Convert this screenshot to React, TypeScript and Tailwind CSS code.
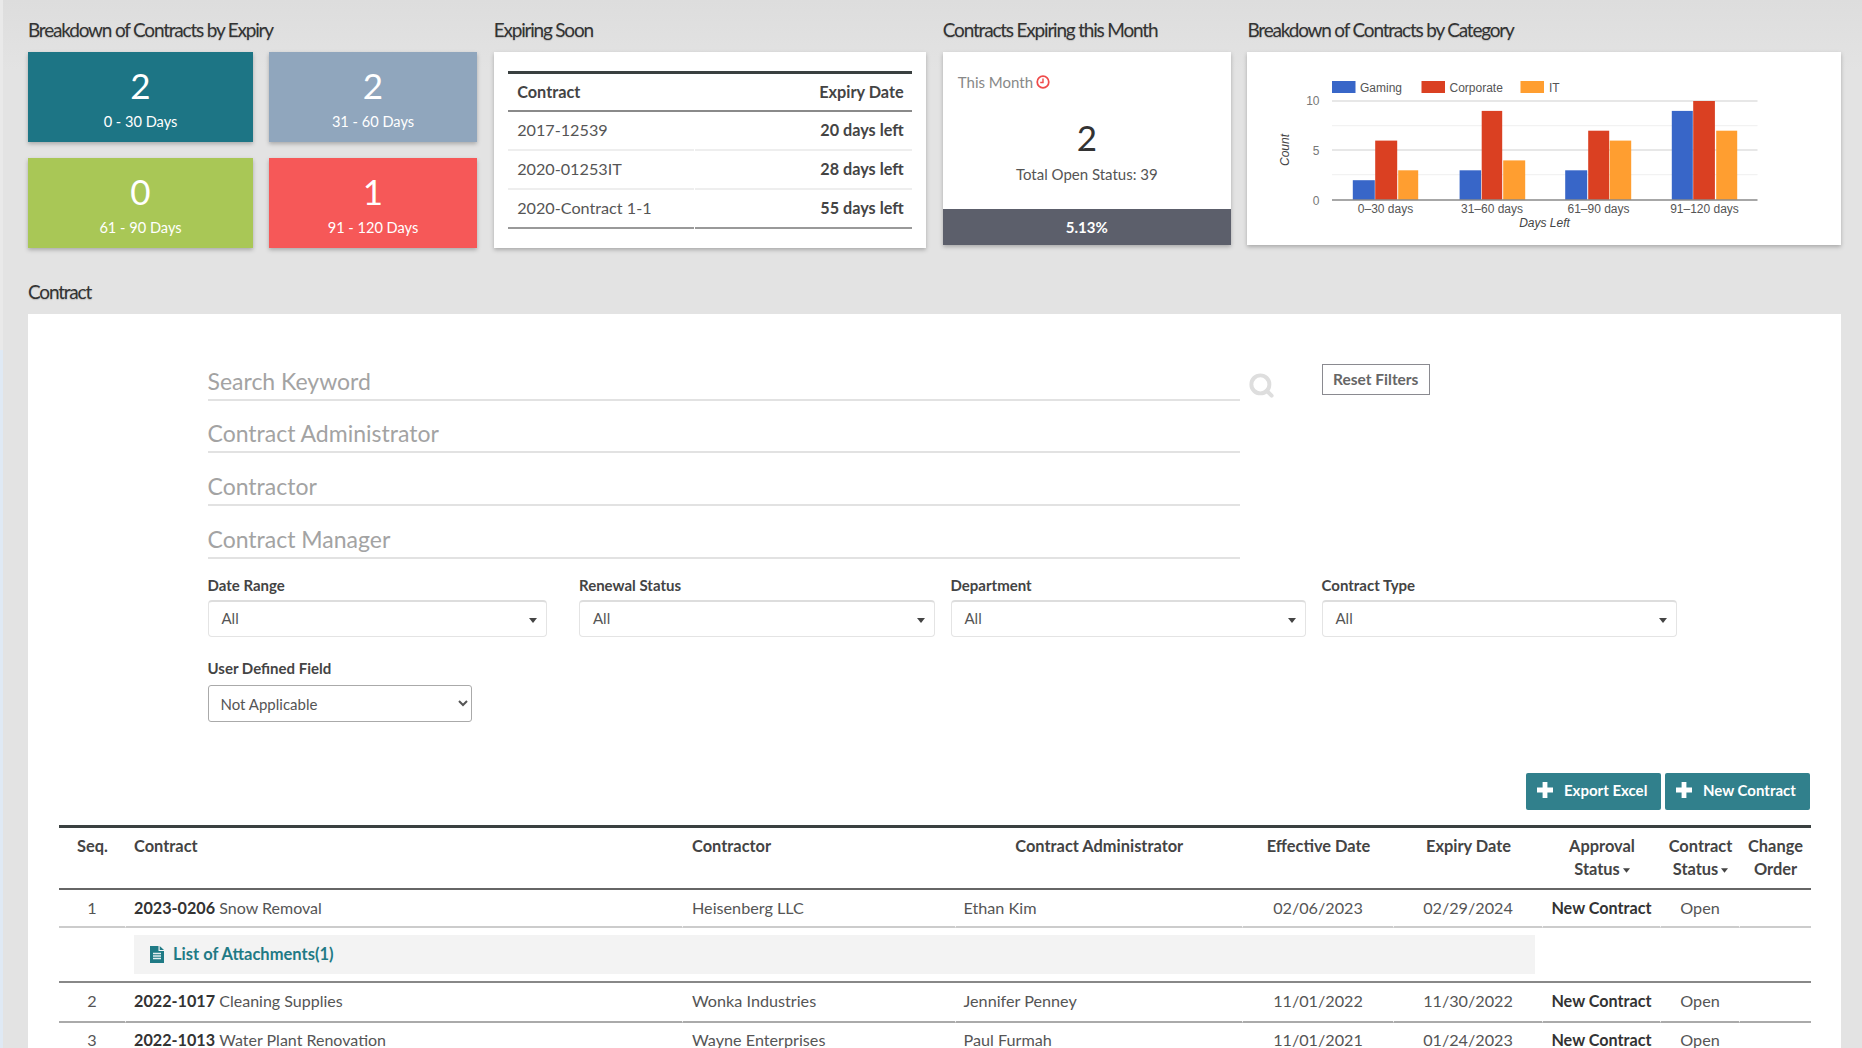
import React from "react";
import { Search } from "lucide-react";

const tiles = [
  { n: "2", l: "0 - 30 Days", c: "bg-[#1d7585]" },
  { n: "2", l: "31 - 60 Days", c: "bg-[#90a6bd]" },
  { n: "0", l: "61 - 90 Days", c: "bg-[#a9c756]" },
  { n: "1", l: "91 - 120 Days", c: "bg-[#f65858]" },
];

const titleCls =
  "h-[22px] leading-[22px] text-[19px] tracking-[-1.2px] text-[#333] [text-shadow:0_1px_1px_#bbb] whitespace-nowrap";
const shadow = "shadow-[0_2px_4px_rgba(0,0,0,0.25)]";

function Chart() {
  const groups = [
    { l: "0–30 days", cx: 1386, bars: [[1353.3, 22, 2], [1375.7, 22, 6], [1398.7, 20, 3]] },
    { l: "31–60 days", cx: 1492.5, bars: [[1460.1, 21.5, 3], [1482.2, 20.5, 9], [1503.7, 22, 4]] },
    { l: "61–90 days", cx: 1599, bars: [[1565.7, 22, 3], [1588.7, 21, 7], [1610.2, 21.5, 6]] },
    { l: "91–120 days", cx: 1705, bars: [[1672.3, 21, 9], [1693.7, 21.7, 10], [1716.7, 21, 7]] },
  ];
  const colors = ["#3866c8", "#da4022", "#ff9e30"];
  const ox = 1247.5;
  const oy = 52;
  return (
    <svg viewBox="0 0 593.5 193" className="w-full h-full block" fontFamily="'Liberation Sans', Arial, sans-serif">
      {[
        [1332.5, "Gaming", 1360.5, 0],
        [1422, "Corporate", 1450, 1],
        [1521, "IT", 1549.5, 2],
      ].map(([x, t, tx, i]) => (
        <g key={t as string}>
          <rect x={(x as number) - ox} y={81 - oy} width={23.5} height={12} fill={colors[i as number]} />
          <text x={(tx as number) - ox} y={91.5 - oy} fontSize={12} fill="#555">{t}</text>
        </g>
      ))}
      {[125.7, 174.7].map((y) => (
        <line key={y} x1={1332.5 - ox} x2={1758 - ox} y1={y - oy} y2={y - oy} stroke="#f2f2f2" strokeWidth={1.2} />
      ))}
      {[101, 150].map((y) => (
        <line key={y} x1={1332.5 - ox} x2={1758 - ox} y1={y - oy} y2={y - oy} stroke="#d0d0d0" strokeWidth={1.2} />
      ))}
      {groups.map((g) => (
        <g key={g.l}>
          {g.bars.map(([x, w, v], i) => (
            <rect key={i} x={x - ox} y={200 - v * 9.9 - oy} width={w} height={v * 9.9} fill={colors[i]} />
          ))}
          <text x={g.cx - ox} y={212.5 - oy} textAnchor="middle" fontSize={12} fill="#555">{g.l}</text>
        </g>
      ))}
      <line x1={1332.5 - ox} x2={1758 - ox} y1={200 - oy} y2={200 - oy} stroke="#8a8a8a" strokeWidth={1.6} />
      {[["10", 105], ["5", 154.5], ["0", 204.5]].map(([t, y]) => (
        <text key={t as string} x={1320 - ox} y={(y as number) - oy} textAnchor="end" fontSize={12} fill="#777">{t}</text>
      ))}
      <text x={1545 - ox} y={227 - oy} textAnchor="middle" fontSize={12} fontStyle="italic" fill="#444">Days Left</text>
      <text transform={`translate(${1289 - ox} ${150 - oy}) rotate(-90)`} textAnchor="middle" fontSize={12} fontStyle="italic" fill="#444">Count</text>
    </svg>
  );
}

function Caret() {
  return (
    <svg viewBox="0 0 8 5" className="inline-block w-[7px] h-[5px] ml-[3px] align-middle">
      <path d="M0 0h8L4 5z" fill="#444" />
    </svg>
  );
}

function ThickPlus() {
  return (
    <svg viewBox="0 0 16 16" className="w-[16px] h-[16px] shrink-0">
      <path d="M5.6 0h4.8v5.6H16v4.8h-5.6V16H5.6v-5.6H0V5.6h5.6z" fill="#ffffff" />
    </svg>
  );
}

function FileIcon() {
  return (
    <svg viewBox="0 0 14 17" className="w-[14px] h-[17px] shrink-0">
      <path d="M0 0h8.5v5H14v12H0z" fill="#1f7a85" />
      <path d="M9.7 0L14 4H9.7z" fill="#1f7a85" />
      <path d="M3 7.5h8M3 10h8M3 12.5h8" stroke="#e4eef0" strokeWidth="1.3" />
    </svg>
  );
}

function FilterSelect({ label, w }: { label: string; w: string }) {
  return (
    <div className={w}>
      <div className="h-[20px] leading-[20px] text-[15px] font-bold text-[#444] mb-[5px]">{label}</div>
      <div className="h-[37px] border border-[#e4e4e4] border-t-[2px] border-t-[#ddd] rounded-[4px] flex items-center justify-between pl-[13px] pr-[9px] text-[15px] text-[#555]">
        <span className="mb-[2px]">All</span>
        <svg viewBox="0 0 8 5" className="w-[8px] h-[5px] mt-[3px]">
          <path d="M0 0h8L4 5z" fill="#444" />
        </svg>
      </div>
    </div>
  );
}

const rows = [
  { s: "1", id: "2023-0206", n: "Snow Removal", c: "Heisenberg LLC", a: "Ethan Kim", e: "02/06/2023", x: "02/29/2024" },
  { s: "2", id: "2022-1017", n: "Cleaning Supplies", c: "Wonka Industries", a: "Jennifer Penney", e: "11/01/2022", x: "11/30/2022" },
  { s: "3", id: "2022-1013", n: "Water Plant Renovation", c: "Wayne Enterprises", a: "Paul Furmah", e: "11/01/2021", x: "01/24/2023" },
];

const rowLine = ["border-b-[#ccc]", "border-b-[#aaa] pb-[1px]", "border-b-[#aaa] pb-[4px]"];
const rowH = ["h-[38px]", "h-[40.5px]", "h-[39.5px]"];

export default function App() {
  return (
    <div className="h-[1048px] overflow-hidden flex bg-[linear-gradient(#dddddd,#e3e3e3_70px)] font-['Lato','Noto_Sans',sans-serif] text-[#444]">
      <div className="w-[3px] shrink-0 bg-[linear-gradient(#e9e9e9_350px,#dfe9f4_350px)]" />
      <div className="flex-1 min-w-0 pl-[25px] pr-[21px]">
        <div className="flex gap-[16.67px] pt-[19px] h-[281px]">
          <div className="w-[449px] shrink-0">
            <div className={`${titleCls} mb-[11px]`}>Breakdown of Contracts by Expiry</div>
            <div className="grid grid-cols-[225px_208px] grid-rows-[90px_90px] gap-x-[16px] gap-y-[16px]">
              {tiles.map((t) => (
                <div key={t.l} className={`${t.c} ${shadow} flex flex-col items-center text-white`}>
                  <div className="mt-[12px] h-[42px] leading-[42px] text-[35px]">{t.n}</div>
                  <div className="mt-[6px] h-[20px] leading-[20px] text-[14.6px]">{t.l}</div>
                </div>
              ))}
            </div>
          </div>
          <div className="w-[432.5px] shrink-0">
            <div className={`${titleCls} mb-[11px]`}>Expiring Soon</div>
            <div className={`h-[196px] bg-white ${shadow} pt-[19px] px-[14.5px]`}>
              <div className="border-t-[3px] border-[#3a4040]">
                <div className="h-[38px] pt-[1px] border-b-2 border-[#8a8a8a] flex items-center justify-between pl-[9px] pr-[8px] text-[16.3px] font-bold text-[#444]">
                  <span>Contract</span>
                  <span>Expiry Date</span>
                </div>
                {[
                  ["2017-12539", "20 days left"],
                  ["2020-01253IT", "28 days left"],
                  ["2020-Contract 1-1", "55 days left"],
                ].map(([a, b], i) => (
                  <div key={a} className="h-[39px] flex gap-[1px] text-[16.2px]">
                    <div className={`w-[185.5px] pl-[9px] flex items-center border-b-2 ${i === 2 ? "border-[#999]" : "border-[#eee]"} text-[#555]`}>
                      {a}
                    </div>
                    <div className={`flex-1 pr-[8px] flex items-center justify-end border-b-2 ${i === 2 ? "border-[#999]" : "border-[#eee]"} font-bold text-[#444]`}>
                      {b}
                    </div>
                  </div>
                ))}
              </div>
            </div>
          </div>
          <div className="w-[288px] shrink-0">
            <div className={`${titleCls} mb-[11px]`}>Contracts Expiring this Month</div>
            <div className={`h-[193px] bg-white ${shadow} flex flex-col`}>
              <div className="flex-1 relative">
                <div className="pt-[20px] pl-[15px] flex items-center gap-[3px] text-[15px] text-[#888] h-[40px]">
                  <span>This Month</span>
                  <svg viewBox="0 0 16 16" className="w-[14px] h-[14px]">
                    <circle cx="8" cy="8" r="6.6" fill="none" stroke="#ef4b4b" strokeWidth="2" />
                    <path d="M8 4v4.5H4.8" fill="none" stroke="#ef4b4b" strokeWidth="1.6" />
                  </svg>
                </div>
                <div className="text-center text-[35px] leading-[42px] text-[#333] mt-[24px]">2</div>
                <div className="text-center text-[15px] leading-[20px] text-[#555] mt-[6px]">Total Open Status: 39</div>
              </div>
              <div className="h-[36px] bg-[#5c5f6b] text-white font-bold text-[15px] flex items-center justify-center">5.13%</div>
            </div>
          </div>
          <div className="w-[593.5px] shrink-0">
            <div className={`${titleCls} mb-[11px]`}>Breakdown of Contracts by Category</div>
            <div className={`h-[193px] bg-white ${shadow}`}>
              <Chart />
            </div>
          </div>
        </div>

        <div className={`${titleCls} mb-[11px]`}>Contract</div>

        <div className="bg-white w-[1813px] h-[800px] pt-[34px]">
          <div className="pl-[179.5px]">
            <div className="flex items-start">
              <div className="w-[1032.5px] shrink-0">
                {["Search Keyword", "Contract Administrator", "Contractor", "Contract Manager"].map((p) => (
                  <div key={p} className="h-[52.7px] border-b-2 border-[#e2e2e2] flex items-end pb-[4px] text-[23px] leading-[28px] text-[#a3a3a3]">
                    {p}
                  </div>
                ))}
              </div>
              <Search className="ml-[8px] mt-[24px] w-[27px] h-[27px] text-[#dedede] shrink-0" strokeWidth={3.5} />
              <button className="ml-[47px] mt-[16px] w-[107.5px] h-[31px] border border-[#8a8a90] text-[15.5px] font-bold text-[#666] bg-white shrink-0">
                Reset Filters
              </button>
            </div>
            <div className="flex mt-[16px]">
              <FilterSelect label="Date Range" w="w-[339px] mr-[32.5px]" />
              <FilterSelect label="Renewal Status" w="w-[355.5px] mr-[16px]" />
              <FilterSelect label="Department" w="w-[355px] mr-[16px]" />
              <FilterSelect label="Contract Type" w="w-[355.5px]" />
            </div>
            <div className="mt-[21px]">
              <div className="h-[20px] leading-[20px] text-[15px] font-bold text-[#444] mb-[7px]">User Defined Field</div>
              <select className="w-[264.5px] h-[37px] border border-[#aaa] rounded-[3px] bg-white pl-[8px] pt-[2px] text-[15px] text-[#555] font-['Lato',sans-serif]" defaultValue="na">
                <option value="na">Not Applicable</option>
              </select>
            </div>
          </div>

          <div className="px-[31px]">
            <div className="mt-[51px] flex justify-end gap-[4.5px]">
              <button className="h-[37px] w-[134.5px] bg-[#31808c] rounded-[2px] text-white text-[15px] font-bold flex items-center pb-[2px] pl-[11px] gap-[11px]">
                <ThickPlus />
                Export Excel
              </button>
              <button className="h-[37px] w-[145px] bg-[#31808c] rounded-[2px] text-white text-[15px] font-bold flex items-center pb-[2px] pl-[11px] gap-[11px]">
                <ThickPlus />
                New Contract
              </button>
            </div>
            <table className="mt-[15px] w-[1751.5px] table-fixed border-separate border-spacing-0 border-t-[3px] border-[#3a4040] text-[16.2px]">
              <colgroup>
                <col className="w-[67px]" />
                <col className="w-[557px]" />
                <col className="w-[272.5px]" />
                <col className="w-[287.5px]" />
                <col className="w-[151px]" />
                <col className="w-[149px]" />
                <col className="w-[118px]" />
                <col className="w-[79px]" />
                <col className="w-[71px]" />
              </colgroup>
              <thead>
                <tr className="text-[#444] text-[16.4px] leading-[23px] align-top">
                  <th className="h-[62px] pt-[6px] border-b-2 border-[#666] text-center font-bold">Seq.</th>
                  <th className="pt-[6px] pl-[8px] border-b-2 border-[#666] text-left font-bold">Contract</th>
                  <th className="pt-[6px] pl-[9px] border-b-2 border-[#666] text-left font-bold">Contractor</th>
                  <th className="pt-[6px] border-b-2 border-[#666] text-center font-bold">Contract Administrator</th>
                  <th className="pt-[6px] border-b-2 border-[#666] text-center font-bold">Effective Date</th>
                  <th className="pt-[6px] border-b-2 border-[#666] text-center font-bold">Expiry Date</th>
                  <th className="pt-[6px] border-b-2 border-[#666] text-center font-bold">Approval<br />Status<Caret /></th>
                  <th className="pt-[6px] border-b-2 border-[#666] text-center font-bold">Contract<br />Status<Caret /></th>
                  <th className="pt-[6px] border-b-2 border-[#666] text-center font-bold">Change<br />Order</th>
                </tr>
              </thead>
              <tbody className="text-[#555]">
                {rows.map((r, i) => {
                  const line = rowLine[i];
                  return (
                    <React.Fragment key={r.s}>
                      <tr className={rowH[i]}>
                        <td className={`text-center border-b-2 border-r border-r-white ${line}`}>{r.s}</td>
                        <td className={`pl-[8px] border-b-2 border-r border-r-white ${line}`}>
                          <b className="font-bold text-[#333]">{r.id}</b> <span className="text-[16px]">{r.n}</span>
                        </td>
                        <td className={`pl-[9px] border-b-2 border-r border-r-white ${line}`}>{r.c}</td>
                        <td className={`pl-[8px] border-b-2 border-r border-r-white ${line}`}>{r.a}</td>
                        <td className={`text-center border-b-2 border-r border-r-white ${line}`}>{r.e}</td>
                        <td className={`text-center border-b-2 border-r border-r-white ${line}`}>{r.x}</td>
                        <td className={`text-center font-bold text-[#333] border-b-2 border-r border-r-white ${line}`}>New Contract</td>
                        <td className={`text-center border-b-2 border-r border-r-white ${line}`}>Open</td>
                        <td className={`border-b-2 ${line}`} />
                      </tr>
                      {i === 0 && (
                        <tr className="h-[55px]">
                          <td className="border-b-2 border-[#888]" />
                          <td colSpan={5} className="border-b-2 border-[#888] px-[8px]">
                            <div className="h-[39px] bg-[#f3f3f3] flex items-center pl-[16px] gap-[9px] text-[16.5px] text-[#1f7a85] font-bold">
                              <FileIcon />
                              <span>List of Attachments(1)</span>
                            </div>
                          </td>
                          <td colSpan={3} className="border-b-2 border-[#888]" />
                        </tr>
                      )}
                    </React.Fragment>
                  );
                })}
              </tbody>
            </table>
          </div>
        </div>
      </div>
    </div>
  );
}
